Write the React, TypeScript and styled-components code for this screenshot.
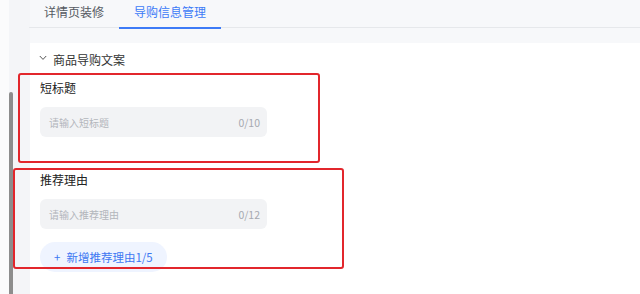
import React from "react";
import styled, { createGlobalStyle } from "styled-components";

const Global = createGlobalStyle`
  html, body { margin: 0; padding: 0; }
  body {
    background: #f7f8fa;
    font-family: "Noto Sans CJK SC", "Noto Sans", "Liberation Sans", sans-serif;
    color: #222;
    overflow: hidden;
  }
  * { box-sizing: border-box; }
`;

const Page = styled.div`
  position: relative;
  width: 640px;
  height: 294px;
  display: flex;
  overflow: hidden;
`;

const ScrollCol = styled.div`
  width: 30px;
  flex: none;
  display: flex;
  padding-top: 92px;
  padding-left: 9px;
  background: linear-gradient(to right, #fbfbfc 0 9px, #f4f5f8 9px);
`;

const Thumb = styled.div`
  width: 4px;
  flex: none;
  height: 210px;
  background: #8d8d8d;
  border-radius: 2px 2px 0 0;
`;

const Main = styled.div`
  flex: 1;
  display: flex;
  flex-direction: column;
  margin-left: -1px;
`;

const TabBar = styled.div`
  height: 28px;
  display: flex;
  border-bottom: 1px solid #e6e8eb;
`;

const Tab = styled.div<{ $active?: boolean }>`
  position: relative;
  padding: 0 15px;
  font-size: 12px;
  line-height: 24px;
  color: ${(p) => (p.$active ? "#3d7bf7" : "#555a62")};
  &::after {
    content: "";
    display: ${(p) => (p.$active ? "block" : "none")};
    position: absolute;
    left: 0;
    right: 0;
    bottom: -2px;
    height: 2px;
    background: #3d7bf7;
  }
`;

const Gap = styled.div`
  height: 15px;
`;

const Panel = styled.div`
  flex: 1;
  background: #fff;
  padding: 0 0 0 10px;
  margin-left: 1px;
`;

const SectionHead = styled.div`
  height: 32px;
  display: flex;
  align-items: center;
  gap: 6px;
  font-size: 12px;
  color: #333;
  margin-left: -1px;
`;

const FieldLabel = styled.div`
  font-size: 12px;
  line-height: 16px;
  color: #222;
  margin-bottom: 11px;
`;

const InputBox = styled.div`
  width: 227px;
  height: 30px;
  background: #f2f3f5;
  border-radius: 6px;
  padding: 0 7px 0 9px;
  display: flex;
  align-items: center;
  justify-content: space-between;
`;

const Placeholder = styled.span`
  font-size: 10px;
  color: #b3b6bc;
`;

const Counter = styled.span`
  font-size: 10.5px;
  color: #a6a9b0;
`;

const Field = styled.div<{ $mt: number }>`
  margin-top: ${(p) => p.$mt}px;
`;

const AddButton = styled.div`
  margin-top: 13px;
  width: 127px;
  height: 30px;
  border-radius: 15px;
  background: #eff4ff;
  color: #3d78f2;
  font-size: 11.5px;
  display: flex;
  align-items: center;
  padding-left: 14px;
  gap: 6px;
`;

const Mark = styled.div<{ $l: number; $t: number; $w: number; $h: number }>`
  position: absolute;
  left: ${(p) => p.$l}px;
  top: ${(p) => p.$t}px;
  width: ${(p) => p.$w}px;
  height: ${(p) => p.$h}px;
  border: 2px solid #e2262c;
  border-radius: 3px;
  pointer-events: none;
`;

const Chevron = () => (
  <svg width="8" height="6" viewBox="0 0 8 6" style={{ marginTop: -3 }}>
    <path d="M0.8 1 L4 4.4 L7.2 1" fill="none" stroke="#555" strokeWidth="1" />
  </svg>
);

export default function App() {
  return (
    <>
      <Global />
      <Page>
        <ScrollCol>
          <Thumb />
        </ScrollCol>
        <Main>
          <TabBar>
            <Tab>详情页装修</Tab>
            <Tab $active>导购信息管理</Tab>
          </TabBar>
          <Gap />
          <Panel>
            <SectionHead>
              <Chevron />
              <span>商品导购文案</span>
            </SectionHead>
            <Field $mt={5}>
              <FieldLabel>短标题</FieldLabel>
              <InputBox>
                <Placeholder>请输入短标题</Placeholder>
                <Counter>0/10</Counter>
              </InputBox>
            </Field>
            <Field $mt={35}>
              <FieldLabel>推荐理由</FieldLabel>
              <InputBox>
                <Placeholder>请输入推荐理由</Placeholder>
                <Counter>0/12</Counter>
              </InputBox>
              <AddButton>
                <span>+</span>
                <span>新增推荐理由1/5</span>
              </AddButton>
            </Field>
          </Panel>
        </Main>
        <Mark $l={18} $t={73} $w={302} $h={90} />
        <Mark $l={13} $t={168} $w={331} $h={101} />
      </Page>
    </>
  );
}
